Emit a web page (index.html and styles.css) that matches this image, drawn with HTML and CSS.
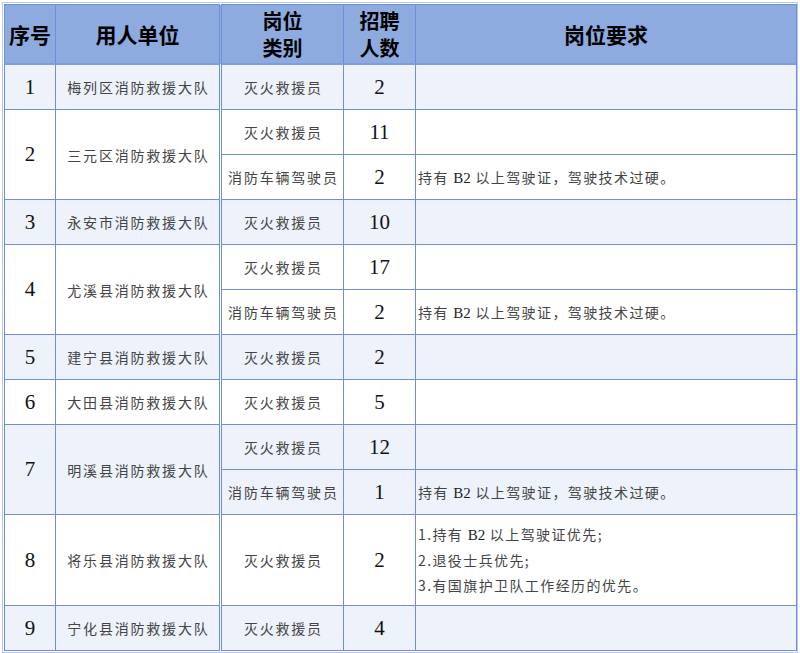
FILE: index.html
```html
<!DOCTYPE html>
<html lang="zh-CN">
<head>
<meta charset="utf-8">
<title>招聘岗位表</title>
<link rel="stylesheet" href="styles.css">
</head>
<body>
<div class="frame">
<table class="jobs">
  <colgroup>
    <col class="c-no"><col class="c-unit"><col class="c-type"><col class="c-num"><col class="c-req">
  </colgroup>
  <thead>
    <tr class="head">
      <th>序号</th>
      <th class="dbl">用人单位</th>
      <th class="two"><div class="ln">岗位</div><div class="ln">类别</div></th>
      <th class="two"><div class="ln">招聘</div><div class="ln">人数</div></th>
      <th>岗位要求</th>
    </tr>
  </thead>
  <tbody>
    <tr class="alt u1">
      <td class="no">1</td><td class="unit dbl">梅列区消防救援大队</td><td class="type">灭火救援员</td><td class="num">2</td><td class="req"></td>
    </tr>
    <tr class="u1">
      <td class="no" rowspan="2">2</td><td class="unit dbl" rowspan="2">三元区消防救援大队</td><td class="type">灭火救援员</td><td class="num">11</td><td class="req"></td>
    </tr>
    <tr class="u1">
      <td class="type">消防车辆驾驶员</td><td class="num">2</td><td class="req">持有 <span class="lat">B2</span> 以上驾驶证，驾驶技术过硬。</td>
    </tr>
    <tr class="alt u1">
      <td class="no">3</td><td class="unit dbl">永安市消防救援大队</td><td class="type">灭火救援员</td><td class="num">10</td><td class="req"></td>
    </tr>
    <tr class="u1">
      <td class="no" rowspan="2">4</td><td class="unit dbl" rowspan="2">尤溪县消防救援大队</td><td class="type">灭火救援员</td><td class="num">17</td><td class="req"></td>
    </tr>
    <tr class="u1">
      <td class="type">消防车辆驾驶员</td><td class="num">2</td><td class="req">持有 <span class="lat">B2</span> 以上驾驶证，驾驶技术过硬。</td>
    </tr>
    <tr class="alt u1">
      <td class="no">5</td><td class="unit dbl">建宁县消防救援大队</td><td class="type">灭火救援员</td><td class="num">2</td><td class="req"></td>
    </tr>
    <tr class="u1">
      <td class="no">6</td><td class="unit dbl">大田县消防救援大队</td><td class="type">灭火救援员</td><td class="num">5</td><td class="req"></td>
    </tr>
    <tr class="alt u1">
      <td class="no" rowspan="2">7</td><td class="unit dbl" rowspan="2">明溪县消防救援大队</td><td class="type">灭火救援员</td><td class="num">12</td><td class="req"></td>
    </tr>
    <tr class="alt u1">
      <td class="type">消防车辆驾驶员</td><td class="num">1</td><td class="req">持有 <span class="lat">B2</span> 以上驾驶证，驾驶技术过硬。</td>
    </tr>
    <tr class="u2">
      <td class="no">8</td><td class="unit dbl">将乐县消防救援大队</td><td class="type">灭火救援员</td><td class="num">2</td>
      <td class="req list"><div>1.持有 <span class="lat">B2</span> 以上驾驶证优先;</div><div>2.退役士兵优先;</div><div>3.有国旗护卫队工作经历的优先。</div></td>
    </tr>
    <tr class="alt u1">
      <td class="no">9</td><td class="unit dbl">宁化县消防救援大队</td><td class="type">灭火救援员</td><td class="num">4</td><td class="req"></td>
    </tr>
  </tbody>
</table>
</div>
</body>
</html>
```
FILE: styles.css
```css
html, body {
  margin: 0;
  padding: 0;
  background: #ffffff;
}
.frame {
  margin: 2px;
  width: 796px;
  border: 1px solid #b7c8ec;
  box-sizing: border-box;
  padding: 1px;
}
.jobs {
  width: 792px;
  border-collapse: collapse;
  table-layout: fixed;
  border: 1px solid #6f90d8;
  font-family: "Noto Sans CJK SC", "Noto Sans", sans-serif;
  color: #3a3a3a;
}
.c-no { width: 51px; }
.c-unit { width: 165px; }
.c-type { width: 123px; }
.c-num { width: 72px; }
.c-req { width: 381px; }

.jobs th, .jobs td {
  border: 1px solid #6f90d8;
  padding: 0;
  text-align: center;
  vertical-align: middle;
}
.head th {
  background: #8eabe0;
  color: #000;
  font-weight: 700;
  font-size: 21px;
  line-height: 26px;
  height: 58px;
  border-bottom: 2px solid #7d9ddf;
}
.head th.two {
  font-size: 20px;
}
.head .ln {
  height: 27px;
  line-height: 27px;
  overflow: visible;
}
.jobs .dbl {
  border-right: 3px double #6f90d8;
}
.alt td {
  background: #eef2fb;
}
.u1 td { height: 44px; }
.u2 td { height: 90px; }

.no, .num {
  font-family: "Liberation Serif", "Times New Roman", serif;
  font-size: 21px;
  color: #111;
}
.unit, .type {
  font-size: 14px;
  letter-spacing: 1.8px;
  color: #444;
  text-indent: 1.8px;
}
.req {
  text-align: left !important;
  padding-left: 2px !important;
  font-size: 14px;
  letter-spacing: 1.4px;
  color: #444;
}
.lat {
  font-family: "Liberation Serif", "Times New Roman", serif;
  font-size: 15px;
  letter-spacing: 0;
  color: #222;
}
.list div {
  line-height: 25px;
}
```
